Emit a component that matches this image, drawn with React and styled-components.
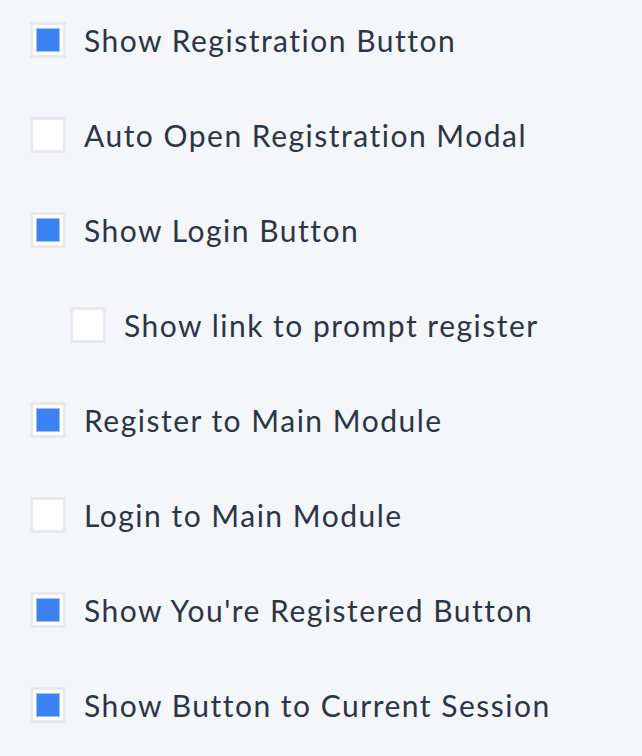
import React, { useState } from 'react'
import styled, { createGlobalStyle } from 'styled-components'

const GlobalStyle = createGlobalStyle`
  html, body {
    margin: 0;
    padding: 0;
    background: #f4f6f9;
  }
  body {
    font-family: Lato, "Noto Sans", sans-serif;
  }
`

const List = styled.div`
  display: flex;
  flex-direction: column;
  gap: 59px;
  padding: 22px 0 0 30px;
  min-height: 756px;
  box-sizing: border-box;
`

const Row = styled.label`
  display: flex;
  align-items: center;
  gap: 18px;
  height: 36px;
  padding-left: ${p => (p.nested ? '40px' : '0')};
  cursor: pointer;
  user-select: none;
`

const Box = styled.span`
  width: 36px;
  height: 36px;
  box-sizing: border-box;
  border: 3px solid #e7e9ec;
  background: #ffffff;
  display: flex;
  align-items: center;
  justify-content: center;
  flex-shrink: 0;
`

const Fill = styled.span`
  width: 22px;
  height: 22px;
  background: #3c82f0;
  box-shadow: 0 0 0 1px #9dbff5;
`

const Label = styled.span`
  font-size: 30px;
  color: #2b3547;
  letter-spacing: 1.5px;
  line-height: 1;
`

const initial = [
  { label: 'Show Registration Button', checked: true },
  { label: 'Auto Open Registration Modal', checked: false },
  { label: 'Show Login Button', checked: true },
  { label: 'Show link to prompt register', checked: false, nested: true },
  { label: 'Register to Main Module', checked: true },
  { label: 'Login to Main Module', checked: false },
  { label: "Show You're Registered Button", checked: true },
  { label: 'Show Button to Current Session', checked: true },
]

const App = () => {
  const [items, setItems] = useState(initial)

  const toggle = i =>
    setItems(items.map((it, j) => (j === i ? { ...it, checked: !it.checked } : it)))

  return (
    <>
      <GlobalStyle />
      <List>
        {items.map((item, i) => (
          <Row key={item.label} nested={item.nested} onClick={() => toggle(i)}>
            <Box>{item.checked && <Fill />}</Box>
            <Label>{item.label}</Label>
          </Row>
        ))}
      </List>
    </>
  )
}

export default App
